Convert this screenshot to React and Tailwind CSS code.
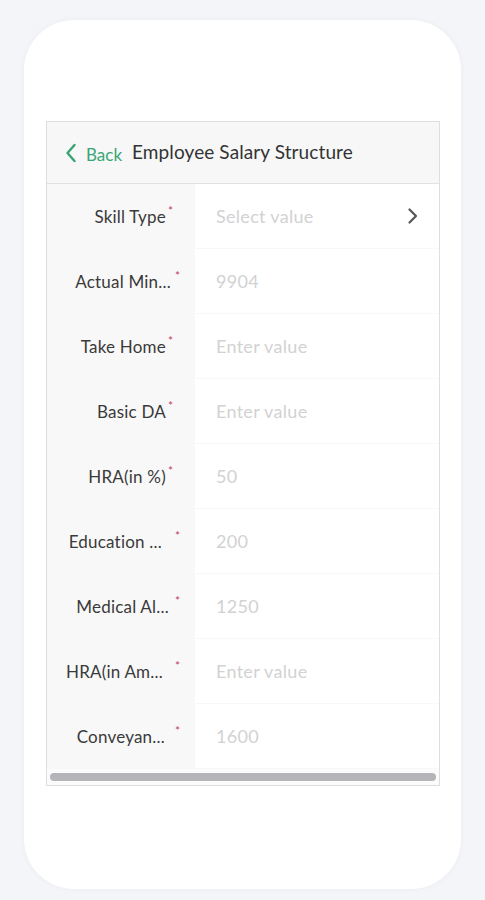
import React from 'react';

// truncated labels sit a little further right, with the asterisk pushed out
const fields = [
  { label: 'Skill Type', value: 'Select value', select: true },
  { label: 'Actual Min...', value: '9904', trunc: true, gap: 'ml-[4px]' },
  { label: 'Take Home', value: 'Enter value' },
  { label: 'Basic DA', value: 'Enter value' },
  { label: 'HRA(in %)', value: '50' },
  { label: 'Education ...', value: '200', trunc: true, gap: 'ml-[13px]' },
  { label: 'Medical Al...', value: '1250', trunc: true, gap: 'ml-[6px]' },
  { label: 'HRA(in Am...', value: 'Enter value', trunc: true, gap: 'ml-[12px]' },
  { label: 'Conveyan...', value: '1600', trunc: true, gap: 'ml-[10px]' },
];

const FieldRow = ({ label, value, select, trunc, gap }) => (
  <div className="flex h-[65px]">
    <div className={`w-[148px] shrink-0 bg-[#f8f8f8] flex items-center justify-end ${trunc ? 'pr-[15px]' : 'pr-[22px]'}`}>
      <span className="text-[17px] tracking-[0.2px] text-[#3a3a3a] whitespace-nowrap">{label}</span>
      <span className={`text-[#c0445a] text-[12px] leading-none self-start mt-[21px] ${gap || 'ml-[2px]'}`}>*</span>
    </div>
    <div className="flex-1 flex items-center pl-[21px] pr-[20px] border-b border-[#f8f8f8]">
      <span className="flex-1 text-[18px] tracking-[0.3px] text-[#d2d2d2]">{value}</span>
      {select && (
        <svg width="12" height="18" viewBox="0 0 12 18" fill="none">
          <path d="M2.5 2.5 L9 9 L2.5 15.5" stroke="#555" strokeWidth="2.2" strokeLinecap="round" strokeLinejoin="round" />
        </svg>
      )}
    </div>
  </div>
);

export default function App() {
  return (
    <div className="min-h-screen w-full bg-[#f3f5f8] pt-[20px] pb-[12px] px-[23px] font-['Lato',_sans-serif]">
      <div className="w-[437px] mx-auto bg-white rounded-[50px] shadow-[0_0_6px_rgba(0,0,0,0.04)] pt-[101px] pb-[103px] pl-[22px] pr-[21px]">
        <div className="border border-[#dedede] bg-white">
          {/* Header */}
          <div className="h-[62px] bg-[#f7f7f7] border-b border-[#e2e2e2] flex items-center pl-[18px]">
            <svg width="12" height="20" viewBox="0 0 12 20" fill="none" className="mt-[1px]">
              <path d="M9.5 2 L2.5 10 L9.5 18" stroke="#35a572" strokeWidth="2.4" strokeLinecap="round" strokeLinejoin="round" />
            </svg>
            <span className="ml-[9px] mt-[4px] text-[17px] text-[#3aa676]">Back</span>
            <span className="ml-[10px] text-[19px] tracking-[0.1px] text-[#333]">Employee Salary Structure</span>
          </div>

          {/* Fields */}
          {fields.map((f) => (
            <FieldRow key={f.label} {...f} />
          ))}

          {/* Scrollbar */}
          <div className="h-[16px] bg-[#fbfbfb] flex items-center px-[3px]">
            <div className="h-[8px] w-full rounded-full bg-[#b5b5b9]" />
          </div>
        </div>
      </div>
    </div>
  );
}
